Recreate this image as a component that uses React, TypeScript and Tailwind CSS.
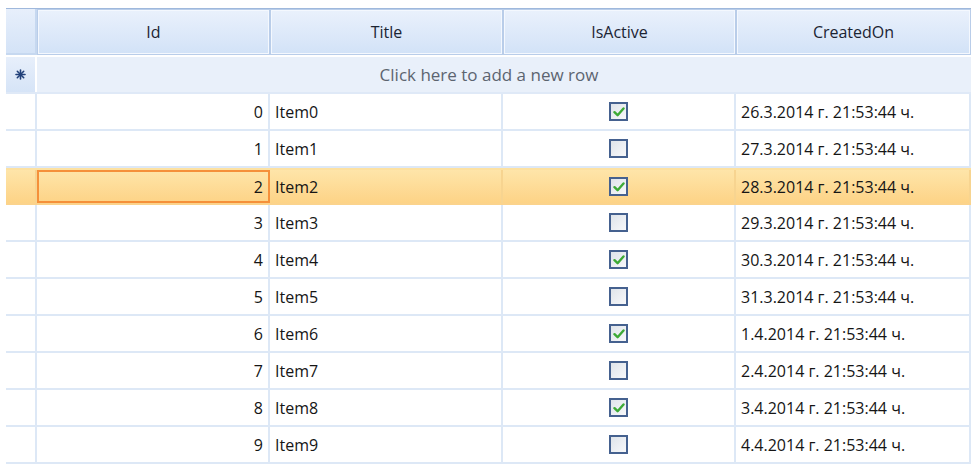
import React from "react";

const ROWS = Array.from({ length: 10 }, (_, i) => {
  const day = 26 + i;
  const date = day <= 31 ? `${day}.3.2014` : `${day - 31}.4.2014`;
  return { id: i, title: `Item${i}`, active: i % 2 === 0, created: `${date} г. 21:53:44 ч.` };
});

const COLS = "grid grid-cols-[31px_233px_233px_233px_235px]";

function CheckBox({ checked }: { checked: boolean }) {
  return (
    <div className="flex h-[19px] w-[19px] items-center justify-center border-2 border-[#45618f] bg-gradient-to-br from-[#dfe4ea] to-[#f7f8fa]">
      {checked && (
        <svg width="12" height="10" viewBox="0 0 12 10">
          <path d="M1.5 5.2 L4.6 8.2 L10.5 1.5" fill="none" stroke="#3daa36" strokeWidth="2.4" strokeLinecap="round" strokeLinejoin="round" />
        </svg>
      )}
    </div>
  );
}

function Star() {
  return (
    <svg width="11" height="11" viewBox="0 0 11 11">
      <g stroke="#20407a" strokeWidth="1.6" strokeLinecap="round">
        <line x1="5.5" y1="1" x2="5.5" y2="10" />
        <line x1="1" y1="5.5" x2="10" y2="5.5" />
        <line x1="2.3" y1="2.3" x2="8.7" y2="8.7" />
        <line x1="8.7" y1="2.3" x2="2.3" y2="8.7" />
      </g>
    </svg>
  );
}

export default function App() {
  return (
    <div className="h-[472px] w-[978px] bg-white pl-[6px] pt-[8px]" style={{ fontFamily: '"Open Sans", "Noto Sans", sans-serif' }}>
      <div className="w-[965px]">
        {/* header */}
        <div className={`${COLS} h-[47px] border-t border-[#9fb8dc] bg-[#e9f0fb] text-[16px] text-[#1b2433]`}>
          <div className="border-b-2 border-r-2 border-b-[#c6d8f0] border-r-[#c6d8f0] bg-gradient-to-b from-[#e7effb] to-[#d4e3f7]" />
          {["Id", "Title", "IsActive", "CreatedOn"].map((h) => (
            <div key={h} className="flex items-center justify-center border border-[#b9cde9] bg-gradient-to-b from-[#eaf1fc] to-[#d2e2f7] shadow-[inset_0_0_0_1px_#f4f8fe]">
              {h}
            </div>
          ))}
        </div>
        {/* new row */}
        <div className={`${COLS} mt-[2px] h-[37px] border-b-2 border-[#dfe9f7] bg-[#e9f0fa]`}>
          <div className="flex items-center justify-center border-r-2 border-white bg-gradient-to-b from-[#e7effb] to-[#d6e4f7]">
            <Star />
          </div>
          <div className="col-span-4 flex items-center justify-center pr-[30px] text-[17px] text-[#5c6470]">
            Click here to add a new row
          </div>
        </div>
        {/* rows */}
        {ROWS.map((r) => {
          const sel = r.id === 2;
          const line = sel ? "border-[#f7d490]" : "border-[#dde8f6]";
          return (
            <div
              key={r.id}
              className={`${COLS} h-[37px] text-[16px] text-[#151515] ${
                sel
                  ? "border-y-2 border-t-[#fde1a1] border-b-[#fbd38c] bg-gradient-to-b from-[#fee5a9] to-[#fdd386]"
                  : "border-b-2 border-[#dde8f6]"
              }`}
            >
              <div className={`border-r-2 ${line}`} />
              <div
                className={`flex items-center justify-end pr-[5px] ${
                  sel ? "border-2 border-[#f5903a]" : "border-r-2 border-[#dde8f6]"
                }`}
              >
                {r.id}
              </div>
              <div className={`flex items-center pl-[5px] border-r-2 ${line}`}>{r.title}</div>
              <div className={`flex items-center justify-center border-r-2 ${line}`}>
                <CheckBox checked={r.active} />
              </div>
              <div className={`flex items-center pl-[5px] border-r-2 ${line}`}>{r.created}</div>
            </div>
          );
        })}
      </div>
    </div>
  );
}
